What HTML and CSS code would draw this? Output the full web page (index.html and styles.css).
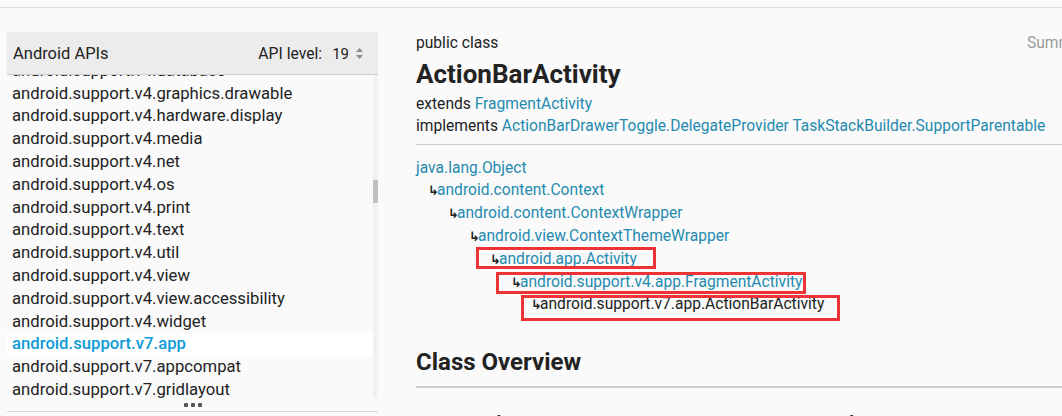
FILE: index.html
```html
<!DOCTYPE html>
<html lang="en">
<head>
<meta charset="utf-8">
<title>ActionBarActivity | Android Developers</title>
<link rel="stylesheet" href="styles.css">
</head>
<body>
<div class="topbar"></div>
<div class="page">
  <aside class="sidebar">
    <div class="nav-head">
      <span class="nav-title">Android APIs</span>
      <span class="api-level">API level:
        <span class="api-select">19
          <svg class="spin" width="7" height="11" viewBox="0 0 7 11"><path d="M3.5 0 L7 4 L0 4 Z M0 7 L7 7 L3.5 11 Z" fill="#8a8a8a"/></svg>
        </span>
      </span>
    </div>
    <div class="nav-body">
      <ul class="nav-list">
        <li>android.support.v4.database</li>
        <li>android.support.v4.graphics.drawable</li>
        <li>android.support.v4.hardware.display</li>
        <li>android.support.v4.media</li>
        <li>android.support.v4.net</li>
        <li>android.support.v4.os</li>
        <li>android.support.v4.print</li>
        <li>android.support.v4.text</li>
        <li>android.support.v4.util</li>
        <li>android.support.v4.view</li>
        <li>android.support.v4.view.accessibility</li>
        <li>android.support.v4.widget</li>
        <li class="selected">android.support.v7.app</li>
        <li>android.support.v7.appcompat</li>
        <li>android.support.v7.gridlayout</li>
        <li>android.support.v7.media</li>
        <li>android.support.v7.mediarouter</li>
      </ul>
      <div class="scroll-track"><div class="scroll-thumb"></div></div>
    </div>
    <div class="nav-resize"><span class="dot"></span><span class="dot"></span><span class="dot"></span></div>
  </aside>
  <main class="main">
    <div class="class-head">
      <span>public class</span>
      <span class="summary">Summary: Methods | Inherited Methods | [Expand All]</span>
    </div>
    <h1 class="title">ActionBarActivity</h1>
    <div class="sig">
      <div>extends <a href="#">FragmentActivity</a></div>
      <div>implements <a href="#">ActionBarDrawerToggle.DelegateProvider</a> <a href="#">TaskStackBuilder.SupportParentable</a></div>
    </div>
    <div class="inherit">
      <div class="row"><a href="#">java.lang.Object</a></div>
      <div class="row l1"><span class="arrow">↳</span><a href="#">android.content.Context</a></div>
      <div class="row l2"><span class="arrow">↳</span><a href="#">android.content.ContextWrapper</a></div>
      <div class="row l3"><span class="arrow">↳</span><a href="#">android.view.ContextThemeWrapper</a></div>
      <div class="row l4"><span class="arrow">↳</span><a href="#">android.app.Activity</a><span class="annot box1"></span></div>
      <div class="row l5"><span class="arrow">↳</span><a href="#">android.support.v4.app.FragmentActivity</a><span class="annot box2"></span></div>
      <div class="row l6"><span class="arrow">↳</span><span class="current">android.support.v7.app.ActionBarActivity</span><span class="annot box3"></span></div>
    </div>
    <h2 class="overview">Class Overview</h2>
    <p class="desc">Base class for activities that use the <a href="#">support library</a> action bar features.</p>
  </main>
</div>
</body>
</html>
```
FILE: styles.css
```css
* { box-sizing: border-box; }
html, body { margin: 0; height: 100%; }
body {
  background: #fafafa;
  font-family: Roboto, "Liberation Sans", Arial, sans-serif;
  color: #222;
  overflow: hidden;
}
a { color: #258aaf; text-decoration: none; }

.topbar { height: 8px; border-bottom: 1px solid #dcdcdc; }

.page { display: flex; padding-left: 7px; }

/* sidebar */
.sidebar { width: 371px; flex: none; margin-top: 24px; }
.nav-head {
  height: 43px;
  background: #ececec;
  border-bottom: 1px solid #cfcfcf;
  display: flex;
  align-items: center;
  padding: 0 15px 0 6px;
  font-size: 16.5px;
}
.nav-title { flex: 1; }
.api-level { display: flex; align-items: center; font-size: 15.7px; }
.api-select { display: flex; align-items: center; gap: 7px; margin-left: 10px; font-size: 15px; font-weight: 400; padding-top: 2px; }
.spin { display: block; margin-top: -2px; }

.nav-body { display: flex; height: 323px; overflow: hidden; }
.nav-list { flex: 1; list-style: none; margin: -15.2px 0 0; padding: 0; }
.nav-list li {
  height: 22.8px;
  line-height: 22.8px;
  padding-left: 5px;
  font-size: 16.7px;
  white-space: nowrap;
}
.nav-list li.selected { background: #fff; color: #0e9bd6; font-weight: 500; }
.scroll-track { width: 5px; flex: none; background: #f1f1f1; }
.scroll-thumb { margin-top: 105px; height: 23px; background: #c1c1c1; }

.nav-resize {
  height: 14px;
  border-bottom: 1px solid #d6d6d6;
  display: flex;
  justify-content: center;
  align-items: center;
  gap: 3px;
}
.dot { width: 4px; height: 4px; background: #555; border-radius: 1px; }

/* main */
.main { margin-left: 38px; flex: 1; min-width: 0; padding-top: 25px; font-size: 15.6px; }
.class-head { display: grid; grid-template-columns: 611px max-content; line-height: 20px; }
.summary { color: #9a9a9a; white-space: nowrap; }
.title { font-size: 26px; font-weight: 700; line-height: 32px; margin: 5px 0 0; color: #222; }
.sig { margin-top: 3px; line-height: 22px; padding-bottom: 7px; border-bottom: 1px solid #cccccc; white-space: nowrap; }

.inherit { margin-top: 11.6px; }
.row { position: relative; height: 22.8px; line-height: 22.8px; white-space: nowrap; }
.l1 { padding-left: 12px; }
.l2 { padding-left: 32px; }
.l3 { padding-left: 53px; }
.l4 { padding-left: 74px; }
.l5 { padding-left: 95px; }
.l6 { padding-left: 115px; }
.arrow { font-family: "DejaVu Sans", sans-serif; font-weight: bold; font-size: 13px; color: #222; display: inline-block; width: 9px; overflow: visible; }
.current { color: #222; }

.annot { position: absolute; border: 3px solid #ec3336; }
.box1 { left: 60px; top: -0.8px; width: 180px; height: 22px; }
.box2 { left: 80px; top: 1.4px; width: 310px; height: 22px; }
.box3 { left: 105px; top: 1.6px; width: 319px; height: 26px; }

.overview {
  font-size: 24px;
  font-weight: 700;
  line-height: 30px;
  margin: 30.8px 0 0;
  padding-bottom: 9px;
  border-bottom: 2px solid #cccccc;
  color: #222;
}
.desc { margin: 24px 0 0; line-height: 22px; white-space: nowrap; }
```
